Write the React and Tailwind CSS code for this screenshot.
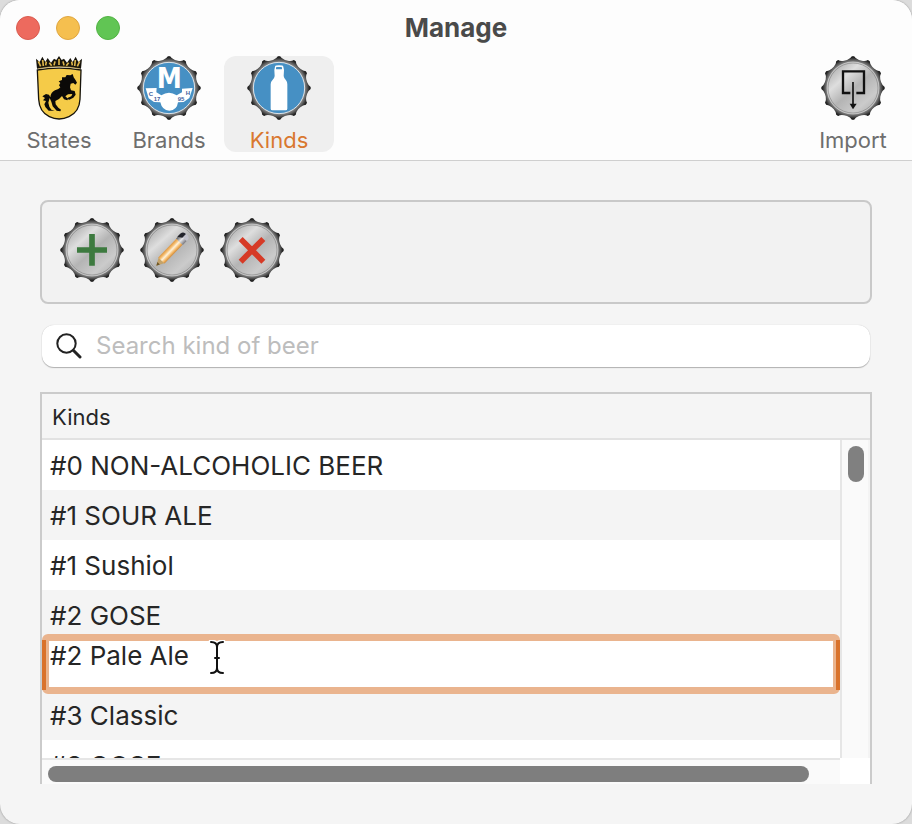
import React from "react";

const TEETH = Array.from({ length: 12 }, (_, i) => i * 30);

function point(radius, degrees) {
  const a = (degrees * Math.PI) / 180;
  return `${(96 + radius * Math.sin(a)).toFixed(1)} ${(96 - radius * Math.cos(a)).toFixed(1)}`;
}

const CAP_OUTLINE =
  TEETH.map(
    (d, i) =>
      `${i === 0 ? "M" : "L"}${point(95, d - 2)} L${point(95, d + 2)} Q${point(88, d + 5)} ${point(86, d + 12)} L${point(86, d + 18)} Q${point(88, d + 25)} ${point(95, d + 28)}`
  ).join(" ") + "Z";

/* Crown cap; the 192-unit drawing holds the symbol in its middle. */
function Cap({ id, blue, children }) {
  return (
    <svg viewBox="0 0 192 192" className="block size-16 shrink-0" aria-hidden="true">
      <defs>
        <linearGradient id={`${id}-face`} x1="0.1" y1="0.05" x2="0.9" y2="0.95">
          <stop offset="0" stopColor="#a8a8a8" />
          <stop offset="0.28" stopColor="#dedede" />
          <stop offset="0.52" stopColor="#b4b4b4" />
          <stop offset="0.8" stopColor="#cbcbcb" />
          <stop offset="1" stopColor="#b0b0b0" />
        </linearGradient>
        <radialGradient id={`${id}-rim`} gradientUnits="userSpaceOnUse" cx="96" cy="96" r="95">
          <stop offset="0.82" stopColor="#868686" />
          <stop offset="0.88" stopColor="#606060" />
          <stop offset="0.94" stopColor="#333" />
          <stop offset="1" stopColor="#0c0c0c" />
        </radialGradient>
      </defs>
      <path d={CAP_OUTLINE} fill={`url(#${id}-rim)`} />
      {blue ? (
        <circle cx="96" cy="96" r="77" fill="#4690c4" stroke="#dde3e8" strokeWidth="3" />
      ) : (
        <>
          <circle cx="96" cy="96" r="78" fill={`url(#${id}-face)`} stroke="#d4d4d4" strokeWidth="2" />
          <circle cx="96" cy="96" r="75" fill="none" stroke="#858585" strokeWidth="2" />
        </>
      )}
      {children}
    </svg>
  );
}

function StatesIcon() {
  return (
    <svg viewBox="0 0 192 192" className="block size-16 shrink-0" aria-hidden="true">
      <path
        d="M31 42 Q96 31 162 42 L159 130 Q157 168 126 182 Q96 196 67 182 Q37 168 35 130Z"
        fill="#f5cb48"
        stroke="#17140c"
        strokeWidth="4"
      />
      <path
        d="M30 38 L27 8 L38 18 L46 2 L55 18 L62 6 L72 20 L81 8 L88 12 L96 0 L104 12 L111 8 L120 20 L130 6 L137 18 L146 2 L154 18 L165 8 L162 38 Q96 27 30 38Z"
        fill="#17140c"
      />
      <path
        d="M34 16 L41 31 M47 12 L49 30 M58 17 L56 28 M67 20 L74 29 M84 16 L81 28 M96 9 L96 27 M108 16 L111 28 M125 20 L118 29 M134 17 L136 28 M145 12 L143 30 M158 16 L151 31"
        stroke="#dcb44a"
        strokeWidth="5"
        fill="none"
      />
      <path d="M34 38 Q96 26 158 38" stroke="#dcb44a" strokeWidth="2" fill="none" />
      <path
        transform="translate(9 -18)"
        d="M128 72 L131 82 L137 91 L141 98 L136 104 L130 99 L122 101 L120 112 L123 121 L134 123 L137 134 L130 143 L118 149 L112 147 L114 143 L124 139 L127 132 L114 133 L106 139 L114 146 L112 151 L102 148 L96 138 L87 147 L76 153 L77 163 L85 173 L93 179 L91 184 L80 182 L68 169 L64 155 L59 144 L55 158 L58 170 L64 179 L74 182 L56 182 L46 171 L43 163 L48 153 L39 151 L45 144 L37 139 L48 132 L57 134 L61 142 Q62 127 75 121 Q87 118 91 112 L87 106 L91 99 L86 94 L96 90 L96 82 L106 82 L110 75 L121 76Z"
        fill="#0b0a08"
      />
    </svg>
  );
}

function BrandsIcon() {
  return (
    <Cap id="brands" blue>
      <text
        x="97"
        y="96"
        textAnchor="middle"
        fontSize="84"
        fontWeight="700"
        fill="#fff"
        fontFamily="'Liberation Sans Narrow', 'DejaVu Sans Condensed', sans-serif"
      >
        M
      </text>
      <path
        d="M26 97 L59 96 L58 109 L73 118 Q96 102 119 118 L135 109 L135 98 L167 96 L157 126 L140 138 L123 139 Q120 163 97 164 Q75 163 70 139 L51 138 L35 127Z"
        fill="#fff"
      />
      <g fill="#3f5f9e" fontFamily="'Liberation Sans', sans-serif" fontWeight="700" fontSize="18" textAnchor="middle">
        <text x="42" y="120">C</text>
        <text x="60" y="134">17</text>
        <text x="132" y="135">95</text>
        <text x="153" y="117">H</text>
      </g>
    </Cap>
  );
}

function KindsIcon() {
  return (
    <Cap id="kinds" blue>
      <path
        d="M84 32 Q84 28 96 28 Q109 28 109 32 L111 42 L110 60 Q111 68 117 73 Q121 77 121 85 L121 158 Q121 163 116 163 L76 163 Q71 163 71 158 L71 85 Q71 77 76 73 Q82 68 83 60 L82 42Z"
        fill="#fff"
      />
      <rect x="87" y="33" width="18" height="7" rx="2" fill="#4690c4" />
    </Cap>
  );
}

function ImportIcon() {
  return (
    <Cap id="import">
      <path d="M88 111 H66 V46 H129 V111 H106" fill="none" stroke="#111" strokeWidth="7" />
      <path d="M96 78 V145" stroke="#111" strokeWidth="5" />
      <path d="M86 143 H107 L96 160Z" fill="#111" />
    </Cap>
  );
}

function AddIcon() {
  return (
    <Cap id="add">
      <path d="M96 48 V143 M51 96 H141" stroke="#3d7a3f" strokeWidth="17" />
    </Cap>
  );
}

function EditIcon() {
  return (
    <Cap id="edit">
      <defs>
        <linearGradient id="pencil" x1="0" y1="0" x2="0" y2="1">
          <stop offset="0" stopColor="#dc963f" />
          <stop offset="0.25" stopColor="#f5bd70" />
          <stop offset="0.5" stopColor="#fff3dc" />
          <stop offset="0.78" stopColor="#f5b968" />
          <stop offset="1" stopColor="#cf8a3a" />
        </linearGradient>
        <linearGradient id="ferrule" x1="0" y1="0" x2="0" y2="1">
          <stop offset="0" stopColor="#555" />
          <stop offset="0.5" stopColor="#e6e6ea" />
          <stop offset="1" stopColor="#77777d" />
        </linearGradient>
      </defs>
      <g transform="translate(49 143) rotate(-46)">
        <path d="M0 0 L24 -13 L24 13Z" fill="#c4a36a" />
        <path d="M0 0 L10 -5 L10 5Z" fill="#6d5527" />
        <rect x="22" y="-13" width="78" height="26" fill="url(#pencil)" />
        <rect x="100" y="-14" width="18" height="28" fill="url(#ferrule)" />
        <path d="M116 -13 H122 Q131 -12 131 0 Q131 14 122 14 H116Z" fill="#c2c2cc" />
        <path d="M106 -15 H120 Q131 -13 130 -2 H114Z" fill="#22232b" />
      </g>
    </Cap>
  );
}

function DeleteIcon() {
  return (
    <Cap id="delete">
      <path d="M62 63 L130 131 M130 63 L62 131" stroke="#d63a26" strokeWidth="17" />
    </Cap>
  );
}

function ToolbarButton({ icon, label, active = false }) {
  return (
    <button
      type="button"
      aria-pressed={active}
      className={`flex h-24 w-[110px] flex-col items-center gap-2 rounded-xl text-[22px] leading-6 ${
        active ? "bg-[#efefef] text-[#d9782f]" : "text-[#6e6e6e]"
      }`}
    >
      {icon}
      <span>{label}</span>
    </button>
  );
}

const BEERS = ["#0 NON-ALCOHOLIC BEER", "#1 SOUR ALE", "#1 Sushiol", "#2 GOSE", "#2 Pale Ale", "#3 Classic", "#3 GOSE"];

function EditingCell({ value }) {
  return (
    <td className="relative block h-full">
      <span className="pointer-events-none absolute inset-x-0 -top-1.5 -bottom-1 z-10 rounded-md border-7 border-[#eab48e]" />
      <span className="pointer-events-none absolute inset-y-0 left-0 z-20 w-1 bg-[#d9722b]" />
      <span className="pointer-events-none absolute inset-y-0 right-0 z-20 w-1 bg-[#d9722b]" />
      <input
        aria-label="Kind name"
        defaultValue={value}
        className="block h-full w-full bg-white px-2 pb-5 outline-none"
      />
      <svg viewBox="0 0 18 36" className="pointer-events-none absolute top-0 left-[166px] z-20 h-9 w-[18px]" aria-hidden="true">
        <g fill="none" strokeLinecap="round">
          <path d="M3 2 Q9 2 9 7 Q9 2 15 2 M9 7 V28 M3 33 Q9 33 9 28 Q9 33 15 33 M7 18 H11" stroke="#fff" strokeWidth="5" />
          <path d="M3 2 Q9 2 9 7 Q9 2 15 2 M9 7 V28 M3 33 Q9 33 9 28 Q9 33 15 33 M7 18 H11" stroke="#111" strokeWidth="2" />
        </g>
      </svg>
    </td>
  );
}

export default function App() {
  return (
    <div className="h-screen bg-[#dcdcdc] font-['Inter','Liberation_Sans',sans-serif] text-[#262626]">
      <div className="flex h-full flex-col overflow-hidden rounded-[20px] bg-[#f5f5f5] shadow-[0_0_2px_#888888]">
        <header className="border-b border-[#cfcfcf] bg-[#fdfdfd] pb-2">
          <div className="grid h-14 grid-cols-[1fr_auto_1fr] items-center px-4">
            <div className="flex gap-4">
              <button type="button" aria-label="Close" className="size-6 rounded-full border border-[#d95c50] bg-[#ed6a5e]" />
              <button type="button" aria-label="Minimize" className="size-6 rounded-full border border-[#dfa641] bg-[#f5bf4f]" />
              <button type="button" aria-label="Zoom" className="size-6 rounded-full border border-[#52b344] bg-[#61c554]" />
            </div>
            <h1 className="text-[26px] leading-8 font-bold text-[#4a4a4a]">Manage</h1>
          </div>
          <nav className="flex px-1">
            <ToolbarButton icon={<StatesIcon />} label="States" />
            <ToolbarButton icon={<BrandsIcon />} label="Brands" />
            <ToolbarButton icon={<KindsIcon />} label="Kinds" active />
            <div className="ml-auto">
              <ToolbarButton icon={<ImportIcon />} label="Import" />
            </div>
          </nav>
        </header>

        <main className="flex min-h-0 flex-1 flex-col px-10 pt-[39px] pb-10">
          <div className="flex shrink-0 gap-4 rounded-lg border-2 border-[#c9c9c9] bg-[#f2f2f2] px-[18px] pt-4 pb-5">
            <button type="button" aria-label="Add kind"><AddIcon /></button>
            <button type="button" aria-label="Edit kind"><EditIcon /></button>
            <button type="button" aria-label="Delete kind"><DeleteIcon /></button>
          </div>

          <label className="mx-0.5 mt-[21px] flex h-[42px] shrink-0 items-center gap-3.5 rounded-xl bg-white px-3.5 shadow-[0_1px_1px_#b0b0b0,0_0_1px_#c0c0c0]">
            <svg viewBox="0 0 26 26" className="size-[26px]" fill="none" stroke="#222" strokeLinecap="round" aria-hidden="true">
              <circle cx="10.5" cy="10.5" r="9.2" strokeWidth="2" />
              <path d="M17.5 17.5 L24 24" strokeWidth="3" />
            </svg>
            <input
              type="text"
              aria-label="Search kind of beer"
              placeholder="Search kind of beer"
              className="min-w-0 flex-1 bg-transparent text-2xl outline-none placeholder:text-[#bdbdbd]"
            />
          </label>

          <div className="mt-[25px] grid min-h-0 flex-1 grid-cols-[minmax(0,1fr)_30px] grid-rows-[46px_minmax(0,1fr)_26px] border-x-2 border-t-2 border-[#cbcbcb]">
            <table className="col-span-2 col-start-1 row-span-2 row-start-1 flex min-h-0 flex-col overflow-hidden text-left">
              <thead className="block shrink-0">
                <tr className="block h-[46px] border-b-2 border-[#e2e2e2]">
                  <th className="block px-2.5 text-[22px] leading-[46px] font-normal">Kinds</th>
                </tr>
              </thead>
              <tbody className="mr-[30px] block min-h-0 flex-1 overflow-hidden text-[26px]">
                {BEERS.map((beer, i) => (
                  <tr key={beer} className="block h-[50px] odd:bg-white even:bg-[#f4f4f4]">
                    {i === 4 ? (
                      <EditingCell value={beer} />
                    ) : (
                      <td className="block px-2 leading-[52px]">{beer}</td>
                    )}
                  </tr>
                ))}
              </tbody>
            </table>
            <div className="col-start-2 row-start-2 border-r-2 border-l-2 border-l-[#e6e6e6] border-r-[#f4f4f4] bg-[#fafafa] pt-1.5 pl-1.5">
              <div className="h-9 w-4 rounded-full bg-[#808080]" />
            </div>
            <div className="col-start-1 row-start-3 border-t-2 border-[#e6e6e6] bg-[#fafafa] pt-1.5 pr-[31px] pl-1.5">
              <div className="h-4 rounded-full bg-[#7e7e7e]" />
            </div>
            <div className="col-start-2 row-start-3 bg-white" />
          </div>
        </main>
      </div>
    </div>
  );
}
